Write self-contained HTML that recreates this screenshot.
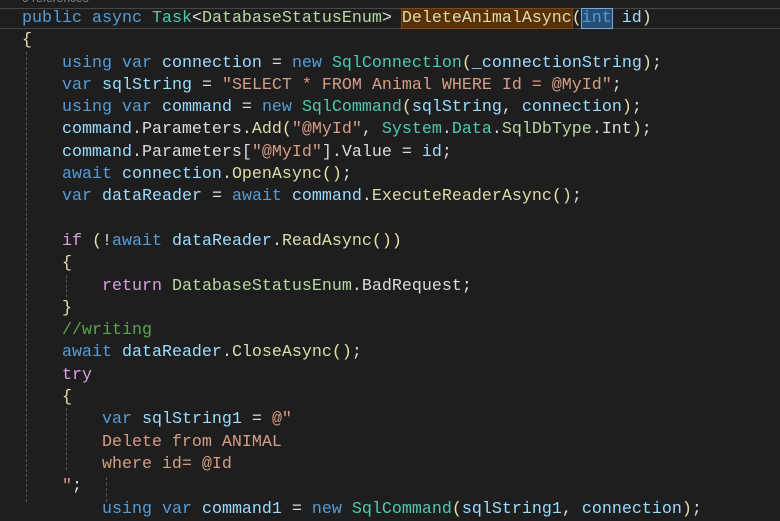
<!DOCTYPE html>
<html><head><style>
body{margin:0;background:#1e1e1e;width:780px;height:502px;overflow:hidden;position:relative;}
pre{margin:0;position:absolute;left:22px;top:8px;font-family:"Liberation Mono",monospace;font-size:16.67px;line-height:22.3px;color:#dcdcdc;}
.k{color:#569cd6}.t{color:#4ec9b0}.m{color:#dcdcaa}.v{color:#9cdcfe}.s{color:#d69d85}.c{color:#57a64a}.p{color:#d8a0df}.e{color:#b8d7a3}.b{color:#e8e0a8}
.g{position:absolute;width:0;border-left:1px dashed #555;}
.hl{background:#5a3008;outline:1px solid #7a4a1a;}
.hi{background:#264f78;outline:1px solid #7aa6da;}
</style></head><body>
<div style="position:absolute;left:22px;top:-9px;font:12px 'Liberation Sans',sans-serif;color:#888">0 references</div>
<div style="position:absolute;left:0;top:8px;width:780px;height:19px;border-top:1px solid #464646;border-bottom:1px solid #464646"></div>
<div class="g" style="left:26px;top:52px;height:450px"></div>
<div class="g" style="left:66px;top:275px;height:22px"></div>
<div class="g" style="left:66px;top:408px;height:62px"></div>
<div class="g" style="left:106px;top:477px;height:25px"></div>
<pre><span class="k">public</span> <span class="k">async</span> <span class="t">Task</span>&lt;<span class="e">DatabaseStatusEnum</span>&gt; <span class="m hl">DeleteAnimalAsync</span><span class="b">(</span><span class="k hi">int</span> <span class="v">id</span><span class="b">)</span>
<span class="b">{</span>
    <span class="k">using</span> <span class="k">var</span> <span class="v">connection</span> = <span class="k">new</span> <span class="t">SqlConnection</span><span class="b">(</span><span class="v">_connectionString</span><span class="b">)</span>;
    <span class="k">var</span> <span class="v">sqlString</span> = <span class="s">"SELECT * FROM Animal WHERE Id = @MyId"</span>;
    <span class="k">using</span> <span class="k">var</span> <span class="v">command</span> = <span class="k">new</span> <span class="t">SqlCommand</span><span class="b">(</span><span class="v">sqlString</span>, <span class="v">connection</span><span class="b">)</span>;
    <span class="v">command</span>.Parameters.<span class="m">Add</span><span class="b">(</span><span class="s">"@MyId"</span>, <span class="t">System</span>.<span class="t">Data</span>.<span class="e">SqlDbType</span>.Int<span class="b">)</span>;
    <span class="v">command</span>.Parameters[<span class="s">"@MyId"</span>].Value = <span class="v">id</span>;
    <span class="k">await</span> <span class="v">connection</span>.<span class="m">OpenAsync</span><span class="b">()</span>;
    <span class="k">var</span> <span class="v">dataReader</span> = <span class="k">await</span> <span class="v">command</span>.<span class="m">ExecuteReaderAsync</span><span class="b">()</span>;

    <span class="p">if</span> <span class="b">(</span>!<span class="k">await</span> <span class="v">dataReader</span>.<span class="m">ReadAsync</span><span class="b">())</span>
    <span class="b">{</span>
        <span class="p">return</span> <span class="e">DatabaseStatusEnum</span>.BadRequest;
    <span class="b">}</span>
    <span class="c">//writing</span>
    <span class="k">await</span> <span class="v">dataReader</span>.<span class="m">CloseAsync</span><span class="b">()</span>;
    <span class="p">try</span>
    <span class="b">{</span>
        <span class="k">var</span> <span class="v">sqlString1</span> = <span class="s">@"</span>
<span class="s">        Delete from ANIMAL</span>
<span class="s">        where id= @Id</span>
<span class="s">    "</span>;
        <span class="k">using</span> <span class="k">var</span> <span class="v">command1</span> = <span class="k">new</span> <span class="t">SqlCommand</span><span class="b">(</span><span class="v">sqlString1</span>, <span class="v">connection</span><span class="b">)</span>;</pre>
</body></html>
